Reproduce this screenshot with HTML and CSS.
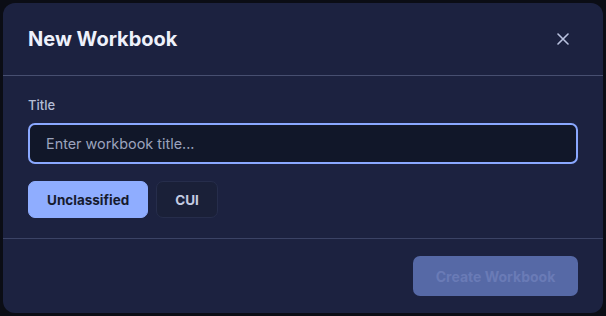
FILE: index.html
```html
<!DOCTYPE html>
<html>
<head>
  <title>New Workbook</title>
  <link rel="stylesheet" href="styles.css">
</head>
<body>
  <div class="modal">
    <div class="modal-header">
      <h2 class="modal-title">New Workbook</h2>
      <button class="close-btn" aria-label="Close">
        <svg width="12" height="12" viewBox="0 0 12 12">
          <path d="M1 1 L11 11 M11 1 L1 11" stroke="currentColor" stroke-width="1.6" stroke-linecap="round"/>
        </svg>
      </button>
    </div>

    <div class="modal-body">
      <label class="field-label" for="title">Title</label>
      <input id="title" class="text-input" type="text" placeholder="Enter workbook title...">
      <div class="class-options">
        <button class="option option-active">Unclassified</button>
        <button class="option">CUI</button>
      </div>
    </div>

    <div class="modal-footer">
      <button class="create-btn" disabled>Create Workbook</button>
    </div>
  </div>
</body>
</html>
```

FILE: styles.css
```css
body {
  margin: 0;
  padding: 3px;
  background-color: #0b0d15;
  font-family: Inter, "Noto Sans", sans-serif;
  min-height: 100vh;
  box-sizing: border-box;
}

.modal {
  width: 600px;
  height: 310px;
  background-color: #1c2240;
  border-radius: 12px;
  display: flex;
  flex-direction: column;
  overflow: hidden;
}

.modal-header {
  display: flex;
  justify-content: space-between;
  align-items: center;
  height: 72px;
  padding: 0 28px 0 25px;
  border-bottom: 1px solid #474f70;
}

.modal-title {
  margin: 0;
  font-size: 20px;
  font-weight: 700;
  color: #eef1fb;
}

.close-btn {
  background: none;
  border: none;
  padding: 0;
  width: 24px;
  height: 24px;
  display: flex;
  align-items: center;
  justify-content: center;
  color: #b9c2df;
  cursor: pointer;
}

.modal-body {
  padding: 20px 25px 20px 25px;
  border-bottom: 1px solid #3b4365;
}

.field-label {
  display: block;
  font-size: 13px;
  font-weight: 500;
  color: #b4bdd6;
  line-height: 18px;
  margin-bottom: 9px;
}

.text-input {
  display: block;
  width: 100%;
  box-sizing: border-box;
  height: 41px;
  padding: 0 16px;
  background-color: #111729;
  border: 2px solid #8aa8ff;
  border-radius: 7px;
  font-family: inherit;
  font-size: 14.4px;
  color: #e6eaf5;
  outline: none;
}

.text-input::placeholder {
  color: #9ba3bd;
}

.class-options {
  display: flex;
  gap: 8px;
  margin-top: 17px;
}

.option {
  height: 37px;
  padding: 0 18px;
  border-radius: 7px;
  border: 1px solid #262d4b;
  background-color: #1a2038;
  font-family: inherit;
  font-size: 13.5px;
  font-weight: 700;
  color: #c3cbe2;
  cursor: pointer;
}

.option-active {
  background-color: #8fadff;
  border-color: #8fadff;
  color: #161b2e;
}

.modal-footer {
  flex: 1;
  display: flex;
  justify-content: flex-end;
  align-items: center;
  padding: 0 25px;
}

.create-btn {
  width: 165px;
  height: 40px;
  border: none;
  border-radius: 7px;
  background-color: #5669a6;
  font-family: inherit;
  font-size: 14px;
  font-weight: 700;
  color: #6a7bb6;
}
```
